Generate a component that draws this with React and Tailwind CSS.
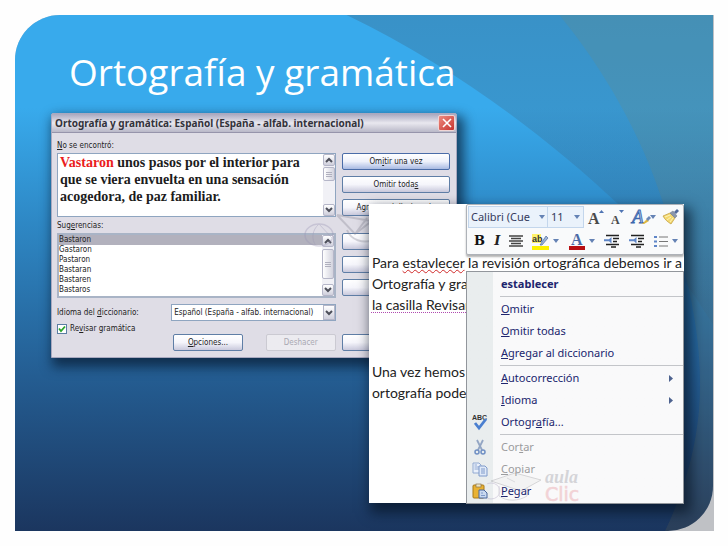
import { useState } from 'react';

const sugerencias = ['Bastaron', 'Gastaron', 'Pastaron', 'Bastaran', 'Bastaren', 'Bastaros'];

function Fondo() {
  return (
    <svg className="absolute inset-0 w-full h-full" viewBox="0 0 699 516" preserveAspectRatio="none" aria-hidden="true">
      <defs>
        <linearGradient id="cielo" x1="0" y1="0" x2="0" y2="1">
          <stop offset="0" stopColor="#38aaec" />
          <stop offset="0.18" stopColor="#38aaec" />
          <stop offset="0.4" stopColor="#2e88c5" />
          <stop offset="0.7" stopColor="#245d92" />
          <stop offset="1" stopColor="#1b365f" />
        </linearGradient>
        <linearGradient id="velo" x1="0" y1="0" x2="0" y2="1">
          <stop offset="0" stopColor="#3c5064" stopOpacity="0.27" />
          <stop offset="1" stopColor="#3c5064" stopOpacity="0.1" />
        </linearGradient>
      </defs>
      <rect width="699" height="516" fill="url(#cielo)" />
      <path d="M332 0C440 52 530 120 605 190C645 230 675 270 699 310V0Z" fill="url(#velo)" />
      <path d="M545 0C590 54 628 122 648 185C676 262 690 330 685 395C681 440 668 480 651 516H699V0Z" fill="#9e823c" fillOpacity="0.13" />
    </svg>
  );
}

function Flecha({ arriba }) {
  return (
    <svg viewBox="0 0 8 6" className="w-2 h-1.5" fill="none" stroke="#4d4f5a" strokeWidth="2" aria-hidden="true">
      <path d={arriba ? 'M1 5L4 2L7 5' : 'M1 1L4 4L7 1'} />
    </svg>
  );
}

function Barra({ pulgar }) {
  return (
    <div className="w-3 shrink-0 flex flex-col bg-[#f1f1f6]">
      <button type="button" aria-label="Subir" className="h-3 flex items-center justify-center border border-[#b5b6c8] bg-linear-to-b from-white to-[#cfcfdc] rounded-xs">
        <Flecha arriba />
      </button>
      <div className={`${pulgar} flex flex-col items-center justify-center gap-px border border-[#b5b6c8] bg-linear-to-r from-white to-[#d3d3de] rounded-xs`}>
        <span className="w-1.5 h-px bg-[#b0b0be]" />
        <span className="w-1.5 h-px bg-[#b0b0be]" />
        <span className="w-1.5 h-px bg-[#b0b0be]" />
      </div>
      <button type="button" aria-label="Bajar" className="mt-auto h-3 flex items-center justify-center border border-[#b5b6c8] bg-linear-to-b from-white to-[#cfcfdc] rounded-xs">
        <Flecha />
      </button>
    </div>
  );
}

function Boton({ children, activo, disabled, nombre }) {
  let estilo = 'border-[#5f7ea6] text-[#222] from-white via-[#f5f5fb] to-[#c9c9dc]';
  if (activo) estilo = 'border-[#4a6ca8] text-[#222] from-white via-[#eef1fb] to-[#a9bae2]';
  if (disabled) estilo = 'border-[#cbcad2] text-[#a9a8b2] from-[#ecebf0] to-[#ecebf0]';
  return (
    <button type="button" aria-label={nombre} disabled={disabled} className={`w-full h-[17px] rounded-xs border bg-linear-to-b whitespace-nowrap leading-3 ${estilo}`}>
      {children}
    </button>
  );
}

function Dialogo() {
  const [elegida, setElegida] = useState('Bastaron');
  const [revisar, setRevisar] = useState(true);

  return (
    <section className="relative w-[58.2%] ml-9 border border-[#a9a9c0] rounded-t-xs bg-[#dfdde6] font-['DejaVu_Sans_Condensed','DejaVu_Sans',sans-serif] text-[8px] leading-[10px] text-[#222] shadow-[4px_6px_12px_3px_rgba(5,20,40,0.65)]">
      <header className="h-[19px] flex items-center justify-between pl-[3px] pr-px bg-linear-to-b from-[#a9a8bf] via-[#e9e8ef] to-[#b9b8c8] border-b border-[#9694ab]">
        <h2 className="font-['Noto_Sans',sans-serif] font-bold text-[10px] leading-4 text-[#33333b] whitespace-nowrap">
          Ortografía y gramática: Español (España - alfab. internacional)
        </h2>
        <button type="button" aria-label="Cerrar" className="w-[17px] h-4 shrink-0 flex items-center justify-center rounded-xs border border-[#f0d5d5] bg-linear-to-br from-[#ec8a80] to-[#c62f2f]">
          <svg viewBox="0 0 10 10" className="w-2.5 h-2.5" stroke="#fff" strokeWidth="1.6" aria-hidden="true">
            <path d="M1 1L9 9M9 1L1 9" />
          </svg>
        </button>
      </header>

      <div className="pl-[5px] pr-1.5 pt-2 pb-1.5">
        <p id="no-encontro" className="mb-[2px]"><u>N</u>o se encontró:</p>
        <div className="grid grid-cols-[280fr_109fr] gap-x-1.5">
          <div className="flex h-16 bg-white border border-[#8fa5c0]">
            <div role="textbox" aria-labelledby="no-encontro" tabIndex={0} className="flex-1 pl-0.5 font-['Liberation_Serif',serif] font-bold text-[14px] leading-[17px] text-[#1c1c1c] whitespace-nowrap">
              <span className="text-[#ea1c20]">Vastaron</span> unos pasos por el interior para<br />
              que se viera envuelta en una sensación<br />
              acogedora, de paz familiar.
            </div>
            <Barra pulgar="h-[14px] mt-px" />
          </div>
          <div className="flex flex-col gap-1.5">
            <Boton activo>Om<u>i</u>tir una vez</Boton>
            <Boton>Omitir toda<u>s</u></Boton>
            <Boton>Agregar al diccionario</Boton>
          </div>
        </div>

        <p id="sugerencias" className="mt-1 mb-[2px]">Sug<u>e</u>rencias:</p>
        <div className="grid grid-cols-[280fr_109fr] gap-x-1.5">
          <div className="flex h-[65px] bg-white border-2 border-[#a9b4c6]">
            <ul role="listbox" aria-labelledby="sugerencias" className="flex-1">
              {sugerencias.map((palabra) => (
                <li
                  key={palabra}
                  role="option"
                  aria-selected={palabra === elegida}
                  onClick={() => setElegida(palabra)}
                  className={palabra === elegida ? 'bg-[#b2b1bd]' : ''}
                >
                  {palabra}
                </li>
              ))}
            </ul>
            <Barra pulgar="h-[30px] mt-0.5" />
          </div>
          <div className="flex flex-col gap-1.5">
            <Boton nombre="Cambiar" />
            <Boton nombre="Cambiar todas" />
            <Boton nombre="Autocorrección" />
          </div>
        </div>

        <div className="mt-1.5 grid grid-cols-[280fr_109fr] gap-x-1.5">
          <div className="flex items-center justify-between">
            <label htmlFor="idioma">Idioma del <u>d</u>iccionario:</label>
            <div className="flex w-[59%] h-[17px] bg-white border border-[#8fa5c0]">
              <select id="idioma" className="flex-1 min-w-0 appearance-none pl-0.5 outline-none">
                <option>Español (España - alfab. internacional)</option>
              </select>
              <span className="w-3 shrink-0 flex items-center justify-center border border-[#b5b6c8] bg-linear-to-b from-white to-[#cfcfdc]">
                <Flecha />
              </span>
            </div>
          </div>
        </div>

        <label className="flex items-center gap-[3px] mt-[3px] w-fit">
          <input type="checkbox" checked={revisar} onChange={(e) => setRevisar(e.target.checked)} className="peer sr-only" />
          <span className="w-2.5 h-2.5 bg-white border border-[#5b7ea3] flex items-center justify-center">
            {revisar && (
              <svg viewBox="0 0 8 8" className="w-2 h-2" fill="none" stroke="#2ba52b" strokeWidth="1.8" aria-hidden="true">
                <path d="M1 3.5L3 6L7 1.5" />
              </svg>
            )}
          </span>
          <span>Re<u>v</u>isar gramática</span>
        </label>

        <div className="grid grid-cols-[280fr_109fr] gap-x-1.5">
          <div className="flex justify-between pl-[116px]">
            <div className="w-[43%]"><Boton><u>O</u>pciones...</Boton></div>
            <div className="w-[43%]"><Boton disabled>Deshacer</Boton></div>
          </div>
          <Boton nombre="Cancelar" />
        </div>
      </div>

      <svg viewBox="0 0 70 36" className="absolute left-[62%] top-[98px] w-[70px] h-9 opacity-35 pointer-events-none" fill="none" stroke="#9a95b5" aria-hidden="true">
        <ellipse cx="16" cy="23" rx="14" ry="11" strokeWidth="1.5" />
        <path d="M16 12C9 18 8 27 13 34M16 12L29 26" />
        <path d="M34 3L52 22L70 8M34 3L68 9M44 18C48 28 60 32 70 28M52 22L64 6" stroke="#8a8a98" strokeWidth="2" />
      </svg>
    </section>
  );
}

function Triangulo() {
  return (
    <svg viewBox="0 0 6 4" className="w-1.5 h-1 shrink-0" fill="#6482b4" aria-hidden="true">
      <path d="M0 0H6L3 4Z" />
    </svg>
  );
}

function BotonBarra({ nombre, children }) {
  return (
    <button type="button" aria-label={nombre} className="h-5 flex items-center justify-center gap-1">
      {children}
    </button>
  );
}

function Sangria() {
  return (
    <svg viewBox="0 0 16 14" className="w-4 h-3.5" aria-hidden="true">
      <path d="M2 1.5H15M9 4.5H15M9 7.5H13M2 10.5H15M7 13H12" stroke="#222" strokeWidth="1.6" />
      <path d="M7.500 3V9.500L5 7.200H0V5.200H5Z" fill="#5f86c8" />
    </svg>
  );
}

function MiniBarra() {
  return (
    <div role="toolbar" aria-label="Formato" className="absolute right-0 top-0 w-[218px] h-[51px] flex flex-col justify-between p-px pb-[3px] bg-[#f9fafb] border border-[#aeb2b8] rounded-xs shadow-[0_2px_2px_rgba(0,0,0,0.3)] font-['Noto_Sans',sans-serif] text-[11px] leading-4 text-[#333a5c]">
      <div className="flex items-center justify-between">
        <div className="flex h-[22px] bg-[#eaf2fb] border border-[#c3d6ec]">
          <button type="button" className="w-[78px] px-0.5 flex items-center justify-between whitespace-nowrap">
            Calibri (Cue <Triangulo />
          </button>
          <button type="button" className="w-9 px-[3px] flex items-center justify-between border-l border-[#c3d6ec]">
            11 <Triangulo />
          </button>
        </div>
        <div className="flex-1 flex items-center justify-between pl-1 pr-0.5">
          <BotonBarra nombre="Agrandar fuente">
            <svg viewBox="0 0 17 16" className="w-[17px] h-4 overflow-visible" aria-hidden="true">
              <text x="0" y="15" fontFamily="Liberation Serif" fontWeight="bold" fontSize="16" fill="#4b4b4b">A</text>
              <path d="M11 4H16L13.500 1Z" fill="#4f74b3" />
            </svg>
          </BotonBarra>
          <BotonBarra nombre="Encoger fuente">
            <svg viewBox="0 0 14 16" className="w-3.5 h-4 overflow-visible" aria-hidden="true">
              <text x="0" y="15" fontFamily="Liberation Serif" fontWeight="bold" fontSize="12" fill="#4b4b4b">A</text>
              <path d="M8 1H13L10.500 4Z" fill="#4f74b3" />
            </svg>
          </BotonBarra>
          <BotonBarra nombre="Estilos">
            <svg viewBox="0 0 24 18" className="w-6 h-[18px] overflow-visible" aria-hidden="true">
              <text x="0" y="15" fontFamily="Liberation Serif" fontStyle="italic" fontSize="19" fill="#a9c4ea" stroke="#3e68ad" strokeWidth="0.9">A</text>
              <path d="M10 16L15 11L17 13L12 16Z" fill="#e0b83e" />
              <path d="M14 11L17 8L19 10L16 13Z" fill="#6c88b8" />
              <path d="M18 7H24L21 11Z" fill="#6482b4" />
            </svg>
          </BotonBarra>
          <BotonBarra nombre="Copiar formato">
            <svg viewBox="0 0 18 18" className="w-[18px] h-[18px]" aria-hidden="true">
              <path d="M1 8L8 5L13 10L9 16C6 14 3 12 1 8Z" fill="#f3d86f" stroke="#bd9a3c" strokeWidth="0.7" />
              <path d="M3 9L8 7M5 12L9 9M8 14L11 10" stroke="#fff3b8" />
              <path d="M8 5L11 3L15 8L13 10Z" fill="#8b97ac" stroke="#777f90" strokeWidth="0.6" />
              <path d="M12 4L15 1L17 3L14 6Z" fill="#536b9c" />
            </svg>
          </BotonBarra>
        </div>
      </div>

      <div className="flex items-center justify-between pl-1.5 pr-1">
        <BotonBarra nombre="Negrita">
          <b className="font-['DejaVu_Serif',serif] text-[13px] text-[#111]">B</b>
        </BotonBarra>
        <BotonBarra nombre="Cursiva">
          <i className="font-['DejaVu_Serif',serif] font-bold text-[13px] text-[#222]">I</i>
        </BotonBarra>
        <BotonBarra nombre="Centrar">
          <svg viewBox="0 0 14 12" className="w-3.5 h-3" stroke="#444" strokeWidth="1.3" aria-hidden="true">
            <path d="M0 1H14M2 3.500H12M0 6H14M2 8.500H12M0 11H14" />
          </svg>
        </BotonBarra>
        <BotonBarra nombre="Color de resaltado">
          <svg viewBox="0 0 17 17" className="w-[17px] h-[17px] overflow-visible" aria-hidden="true">
            <rect x="0" y="1" width="9" height="9" fill="#fff36b" />
            <text x="0" y="9" fontFamily="Liberation Sans" fontWeight="bold" fontSize="9" fill="#333">ab</text>
            <path d="M8 12L14 3L16 5L10 12Z" fill="#9db4da" stroke="#4f6b9c" strokeWidth="0.7" />
            <rect x="0" y="13" width="17" height="4" fill="#fdf100" />
          </svg>
          <Triangulo />
        </BotonBarra>
        <BotonBarra nombre="Color de fuente">
          <svg viewBox="0 0 16 17" className="w-4 h-[17px] overflow-visible" aria-hidden="true">
            <text x="2" y="12" fontFamily="Liberation Serif" fontWeight="bold" fontSize="16" fill="#4c6ba6">A</text>
            <rect x="0" y="13" width="16" height="4" fill="#b80f12" />
          </svg>
          <Triangulo />
        </BotonBarra>
        <BotonBarra nombre="Reducir sangría"><Sangria /></BotonBarra>
        <BotonBarra nombre="Aumentar sangría"><Sangria /></BotonBarra>
        <BotonBarra nombre="Viñetas">
          <svg viewBox="0 0 14 13" className="w-3.5 h-[13px]" aria-hidden="true">
            <path d="M0 1H3V3H0ZM0 5.500H3V7.500H0ZM0 10H3V12H0Z" fill="#5f86c8" />
            <path d="M5 2H14M5 6.500H14M5 11H14" stroke="#777" />
          </svg>
          <Triangulo />
        </BotonBarra>
      </div>
    </div>
  );
}

const iconos = {
  ortografia: (
    <>
      <text x="0" y="6" fontFamily="Liberation Sans" fontWeight="bold" fontSize="7" fill="#333">ABC</text>
      <path d="M3 9L7 14L14 5" fill="none" stroke="#4a7fd0" strokeWidth="2.800" />
    </>
  ),
  cortar: (
    <>
      <path d="M5 1L10 11M11 1L6 11" stroke="#93a6c4" strokeWidth="1.800" />
      <circle cx="5" cy="13" r="2" fill="none" stroke="#6f8fc4" strokeWidth="1.500" />
      <circle cx="11" cy="13" r="2" fill="none" stroke="#6f8fc4" strokeWidth="1.500" />
    </>
  ),
  copiar: (
    <>
      <path d="M1 2H7L9 4V12H1Z" fill="#e9f0fb" stroke="#92aad2" />
      <path d="M2.500 6H7M2.500 8H7M2.500 4H5" stroke="#92aad2" />
      <path d="M7 5H13L15 7V15H7Z" fill="#dfe9f8" stroke="#7e9aca" />
      <path d="M9 8H13M9 10H13M9 12H13" stroke="#7e9aca" />
    </>
  ),
  pegar: (
    <>
      <rect x="1" y="2" width="11" height="13" rx="1" fill="#e9b233" stroke="#a87818" />
      <rect x="4" y="1" width="5" height="3" fill="#efe6c4" stroke="#8a744a" strokeWidth="0.700" />
      <path d="M7 7H12L15 10V15H7Z" fill="#c9d9f0" stroke="#49679c" />
      <path d="M9 10H11M9 12.500H13" stroke="#7e9aca" />
    </>
  ),
};

function Opcion({ icono, submenu, disabled, children }) {
  return (
    <li className="flex">
      <button type="button" role="menuitem" disabled={disabled} className={`h-[22px] w-full flex items-center ${disabled ? 'text-[#9b9c9e]' : 'text-[#20256e]'}`}>
        <span className="w-[26px] shrink-0 flex justify-center">
          {icono && <svg viewBox="0 0 16 16" className="w-4 h-4 overflow-visible" aria-hidden="true">{iconos[icono]}</svg>}
        </span>
        <span className="pl-2 flex-1 text-left">{children}</span>
        {submenu && (
          <svg viewBox="0 0 4 7" className="w-1 h-[7px] mr-2.5" fill="#4d628f" aria-hidden="true">
            <path d="M0 0L4 3.500L0 7Z" />
          </svg>
        )}
      </button>
    </li>
  );
}

function Separador() {
  return <li role="separator" className="h-px ml-[33px] my-px bg-[#c3c5c9]" />;
}

function MenuContextual() {
  return (
    <div className="absolute right-0 top-[67px] w-[218px] border border-[#92969c] bg-linear-to-r from-[#e9edee] from-[26px] to-[#f9f9fa] to-[26px] font-['Noto_Sans',sans-serif] text-[11px] leading-4">
      <svg viewBox="0 0 116 40" className="absolute left-5 bottom-0 w-[116px] h-10 opacity-45" aria-hidden="true">
        <path d="M4 18L28 10L54 17L34 28Z" fill="#ececec" stroke="#a9a9ad" />
        <path d="M12 23V33C20 39 32 38 40 33V25M28 19L20 15" fill="none" stroke="#b4b2ba" />
        <ellipse cx="4" cy="28" rx="9" ry="8" fill="none" stroke="#b8aeca" />
        <text x="58" y="20" fontFamily="Liberation Serif" fontStyle="italic" fontWeight="bold" fontSize="18" fill="#a7a7b0">aula</text>
        <text x="58" y="38" fontFamily="DejaVu Sans" fontSize="19" fill="#e8a3ab" stroke="#e8a3ab" strokeWidth="0.6">Clic</text>
      </svg>
      <ul role="menu" className="relative py-px">
        <Opcion><b>establecer</b></Opcion>
        <Separador />
        <Opcion><u>O</u>mitir</Opcion>
        <Opcion><u>O</u>mitir todas</Opcion>
        <Opcion><u>A</u>gregar al diccionario</Opcion>
        <Separador />
        <Opcion submenu><u>A</u>utocorrección</Opcion>
        <Opcion submenu><u>I</u>dioma</Opcion>
        <Opcion icono="ortografia">Ortogr<u>a</u>fía...</Opcion>
        <Separador />
        <Opcion icono="cortar" disabled>Cor<u>t</u>ar</Opcion>
        <Opcion icono="copiar" disabled><u>C</u>opiar</Opcion>
        <Opcion icono="pegar"><u>P</u>egar</Opcion>
      </ul>
    </div>
  );
}

function Documento() {
  return (
    <section className="absolute left-[50.7%] right-[29px] top-[189px] h-[299px] bg-white shadow-[4px_7px_12px_3px_rgba(5,15,30,0.65)]">
      <div className="h-full overflow-hidden whitespace-nowrap pt-12 pl-[3px] font-['Lato',sans-serif] text-[14px] leading-[21px] text-[#222]">
        <p>
          Para <span className="underline decoration-wavy decoration-[#d02a2a] decoration-1">estavlecer</span> la revisión ortográfica debemos ir a l
        </p>
        <p>Ortografía y gra</p>
        <p><span className="underline decoration-dotted decoration-[#b04bb0] decoration-1 underline-offset-2">la casilla Revisar</span></p>
        <p className="mt-[46px]">Una vez hemos</p>
        <p>ortografía pode</p>
      </div>
      <MiniBarra />
      <MenuContextual />
    </section>
  );
}

export default function App() {
  return (
    <main className="min-h-screen flex bg-[#fefefe] pt-[15px] pr-3.5 pb-[15px] pl-[15px]">
      <div className="flex-1 flex bg-[#bfc1c5] rounded-tl-[45px] pr-px">
        <div className="relative flex-1 overflow-hidden rounded-tl-[45px] rounded-br-[45px]">
          <Fondo />
          <h1 className="relative pl-[54px] pt-8 pb-4 font-['Open_Sans',sans-serif] text-[37px] leading-[50px] text-white whitespace-nowrap">
            Ortografía y gramática
          </h1>
          <Dialogo />
          <Documento />
        </div>
      </div>
    </main>
  );
}
